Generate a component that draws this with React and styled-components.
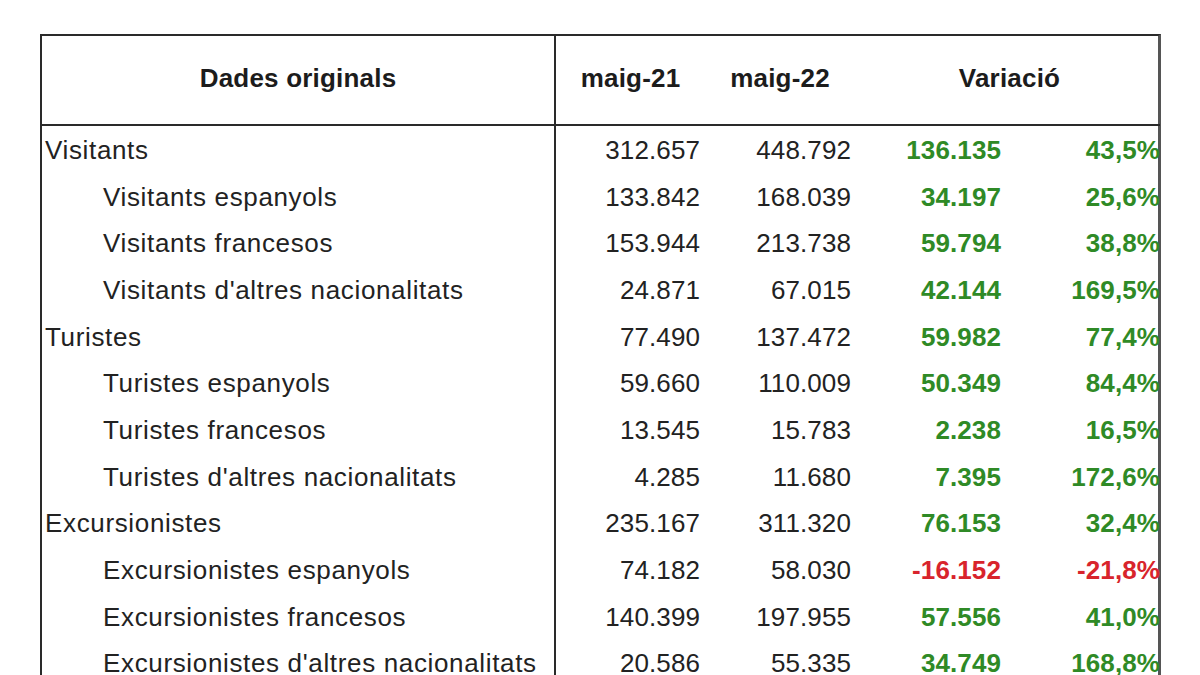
import React from "react";
import styled, { createGlobalStyle } from "styled-components";

const GlobalStyle = createGlobalStyle`
  html, body { margin: 0; padding: 0; background: #ffffff; }
  body { font-family: "Liberation Sans", Arial, sans-serif; color: #1f1f1f; }
`;

const Page = styled.div`
  width: 1200px;
  height: 675px;
  overflow: hidden;
  background: #fff;
  padding: 34px 0 0 40px;
  box-sizing: border-box;
`;

const Table = styled.div`
  width: 1121px;
  box-sizing: border-box;
  border-top: 2px solid #2a2a2a;
  border-left: 2px solid #2a2a2a;
  border-right: 3px solid #555;
  display: grid;
  grid-template-columns: 514px 149px 150px 150px 155px;
`;

const HeadCell = styled.div`
  height: 90px;
  border-bottom: 2px solid #2a2a2a;
  ${(p) => (p.$divider ? "border-right: 2px solid #2a2a2a;" : "")}
  grid-column: span ${(p) => p.$span || 1};
  display: flex;
  align-items: center;
  justify-content: center;
  padding-bottom: 4px;
  box-sizing: border-box;
  font-weight: bold;
  font-size: 26px;
  letter-spacing: 0.2px;
  padding-left: ${(p) => p.$shift || 0}px;
  color: #1c1c1c;
`;

const LabelCell = styled.div`
  height: 46.7px;
  border-right: 2px solid #2a2a2a;
  display: flex;
  align-items: center;
  padding-left: ${(p) => (p.$level ? 61 : 3)}px;
  padding-top: 2px;
  box-sizing: border-box;
  font-size: 26px;
  letter-spacing: 0.65px;
  white-space: nowrap;
  color: #222;
`;

const NumCell = styled.div`
  height: 46.7px;
  display: flex;
  align-items: center;
  justify-content: flex-end;
  padding-right: ${(p) => p.$pad}px;
  padding-top: 2px;
  box-sizing: border-box;
  font-size: 26px;
  white-space: nowrap;
  font-weight: ${(p) => (p.$bold ? "bold" : "normal")};
  letter-spacing: 0.1px;
  color: ${(p) =>
    p.$tone === "pos" ? "#2f8a26" : p.$tone === "neg" ? "#d8242c" : "#222"};
`;

const rows = [
  ["Visitants", 0, "312.657", "448.792", "136.135", "43,5%"],
  ["Visitants espanyols", 1, "133.842", "168.039", "34.197", "25,6%"],
  ["Visitants francesos", 1, "153.944", "213.738", "59.794", "38,8%"],
  ["Visitants d'altres nacionalitats", 1, "24.871", "67.015", "42.144", "169,5%"],
  ["Turistes", 0, "77.490", "137.472", "59.982", "77,4%"],
  ["Turistes espanyols", 1, "59.660", "110.009", "50.349", "84,4%"],
  ["Turistes francesos", 1, "13.545", "15.783", "2.238", "16,5%"],
  ["Turistes d'altres nacionalitats", 1, "4.285", "11.680", "7.395", "172,6%"],
  ["Excursionistes", 0, "235.167", "311.320", "76.153", "32,4%"],
  ["Excursionistes espanyols", 1, "74.182", "58.030", "-16.152", "-21,8%"],
  ["Excursionistes francesos", 1, "140.399", "197.955", "57.556", "41,0%"],
  ["Excursionistes d'altres nacionalitats", 1, "20.586", "55.335", "34.749", "168,8%"],
];

export default function App() {
  return (
    <>
      <GlobalStyle />
      <Page>
        <Table>
          <HeadCell $divider>Dades originals</HeadCell>
          <HeadCell>maig-21</HeadCell>
          <HeadCell>maig-22</HeadCell>
          <HeadCell $span={2} $shift={4}>Variació</HeadCell>
          {rows.map(([label, level, a, b, d, p]) => {
            const tone = d.startsWith("-") ? "neg" : "pos";
            return (
              <React.Fragment key={label}>
                <LabelCell $level={level}>{label}</LabelCell>
                <NumCell $pad={5}>{a}</NumCell>
                <NumCell $pad={4}>{b}</NumCell>
                <NumCell $pad={4} $bold $tone={tone}>{d}</NumCell>
                <NumCell $pad={0} $bold $tone={tone}>{p}</NumCell>
              </React.Fragment>
            );
          })}
        </Table>
      </Page>
    </>
  );
}
